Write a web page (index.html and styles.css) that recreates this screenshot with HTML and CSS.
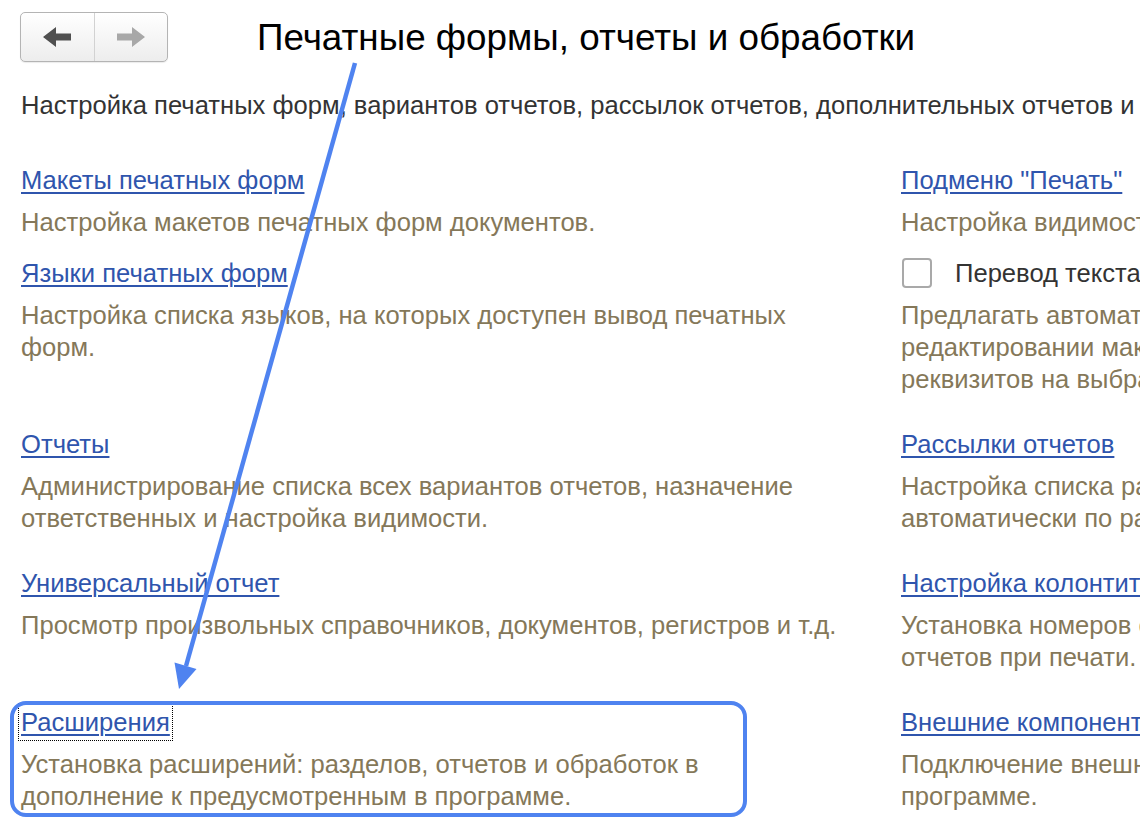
FILE: index.html
```html
<!DOCTYPE html>
<html lang="ru">
<head>
<meta charset="utf-8">
<title>Печатные формы, отчеты и обработки</title>
<link rel="stylesheet" href="styles.css">
</head>
<body>
<div class="page">
  <header class="top">
    <div class="nav">
      <button class="nav-btn back" type="button" aria-label="Назад">
        <svg width="28" height="20" viewBox="0 0 28 20"><polygon points="0,10 13,0 13,6.5 28,6.5 28,13.5 13,13.5 13,20" fill="#505050"/></svg>
      </button>
      <button class="nav-btn fwd" type="button" aria-label="Вперед">
        <svg width="28" height="20" viewBox="0 0 28 20"><polygon points="28,10 15,0 15,6.5 0,6.5 0,13.5 15,13.5 15,20" fill="#a8a8a8"/></svg>
      </button>
    </div>
    <h1 class="title">Печатные формы, отчеты и обработки</h1>
  </header>

  <p class="intro">Настройка печатных форм, вариантов отчетов, рассылок отчетов, дополнительных отчетов и обработок.</p>

  <div class="grid">
    <div class="cell left">
      <div class="item">
        <a class="link" href="#">Макеты печатных форм</a>
        <p class="desc">Настройка макетов печатных форм документов.</p>
      </div>
      <div class="item">
        <a class="link" href="#">Языки печатных форм</a>
        <p class="desc">Настройка списка языков, на которых доступен вывод печатных форм.</p>
      </div>
    </div>
    <div class="cell right">
      <div class="item">
        <a class="link" href="#">Подменю "Печать"</a>
        <p class="desc">Настройка видимости команд в подменю "Печать".</p>
      </div>
      <div class="item">
        <label class="check-row"><span class="checkbox"></span><span class="check-label">Перевод текста при редактировании</span></label>
        <p class="desc">Предлагать автоматический перевод текста при<br>редактировании макетов, а также перевод<br>реквизитов на выбранный язык.</p>
      </div>
    </div>

    <div class="cell left">
      <div class="item">
        <a class="link" href="#">Отчеты</a>
        <p class="desc">Администрирование списка всех вариантов отчетов, назначение ответственных и настройка видимости.</p>
      </div>
    </div>
    <div class="cell right">
      <div class="item">
        <a class="link" href="#">Рассылки отчетов</a>
        <p class="desc">Настройка списка рассылок отчетов, выполняемых<br>автоматически по расписанию.</p>
      </div>
    </div>

    <div class="cell left">
      <div class="item">
        <a class="link" href="#">Универсальный отчет</a>
        <p class="desc">Просмотр произвольных справочников, документов, регистров и т.д.</p>
      </div>
    </div>
    <div class="cell right">
      <div class="item">
        <a class="link" href="#">Настройка колонтитулов</a>
        <p class="desc">Установка номеров страниц, даты и времени для<br>отчетов при печати.</p>
      </div>
    </div>

    <div class="cell left">
      <div class="item highlighted">
        <a class="link focused" href="#">Расширения</a>
        <p class="desc">Установка расширений: разделов, отчетов и обработок в дополнение к предусмотренным в программе.</p>
      </div>
    </div>
    <div class="cell right">
      <div class="item">
        <a class="link" href="#">Внешние компоненты</a>
        <p class="desc">Подключение внешних компонент, используемых в<br>программе.</p>
      </div>
    </div>
  </div>

  <svg class="annot-arrow" width="1140" height="822" viewBox="0 0 1140 822" aria-hidden="true">
    <line x1="355" y1="63" x2="186" y2="666" stroke="#4f83f0" stroke-width="4.5" stroke-linecap="butt"/>
    <polygon points="179,689 174.5,662.5 196.5,669" fill="#4f83f0"/>
  </svg>
</div>
</body>
</html>
```

FILE: styles.css
```css
* { box-sizing: border-box; }

html, body {
  margin: 0;
  padding: 0;
  background: #ffffff;
}

body {
  width: 1140px;
  height: 822px;
  overflow: hidden;
  font-family: "Liberation Sans", Arial, sans-serif;
  font-size: 25.6px;
  line-height: 32px;
  color: #333333;
}

.page {
  position: relative;
  width: 1140px;
  height: 822px;
}

.top {
  display: flex;
  align-items: flex-start;
  gap: 89px;
  padding: 12px 0 0 20px;
}

.nav {
  display: flex;
  flex: none;
  width: 148px;
  height: 50px;
  border: 1px solid #b4b4b4;
  border-radius: 5px;
  background: linear-gradient(#ffffff, #ededed);
  box-shadow: 0 1px 1px rgba(0, 0, 0, 0.08);
  overflow: hidden;
}

.nav-btn {
  flex: 1;
  display: flex;
  align-items: center;
  justify-content: center;
  border: 0;
  padding: 0;
  margin: 0;
  background: transparent;
}

.nav-btn.back {
  border-right: 1px solid #d2d2d2;
}

.title {
  margin: 5px 0 0 0;
  font-size: 36.8px;
  line-height: 42px;
  font-weight: normal;
  color: #000000;
  white-space: nowrap;
}

.intro {
  margin: 27px 0 0 21px;
  white-space: nowrap;
  color: #333333;
}

.grid {
  display: grid;
  grid-template-columns: 880px 400px;
  row-gap: 33px;
  margin-top: 43px;
  padding-left: 21px;
}

.cell {
  display: flex;
  flex-direction: column;
  gap: 19px;
}

.item {
  display: flex;
  flex-direction: column;
  align-items: flex-start;
  gap: 10px;
}

.link {
  color: #2f55ad;
  text-decoration: underline;
  text-decoration-thickness: 2px;
  text-underline-offset: 3px;
}

.link.focused {
  outline: 1px dotted #000000;
  outline-offset: 2px;
}

.desc {
  margin: 0;
  color: #857859;
}

.left .desc {
  max-width: 831px;
}

.left .highlighted .desc {
  max-width: 712px;
}

.right .desc {
  white-space: nowrap;
}

.check-row {
  display: flex;
  align-items: center;
  height: 32px;
  color: #333333;
  white-space: nowrap;
}

.checkbox {
  flex: none;
  width: 30px;
  height: 30px;
  margin-left: 1px;
  border: 2px solid #a9a9a9;
  border-radius: 4px;
  background: #ffffff;
}

.check-label {
  margin-left: 23px;
}

.highlighted {
  position: relative;
}

.highlighted::after {
  content: "";
  position: absolute;
  left: -11px;
  top: -5px;
  bottom: -5px;
  width: 729px;
  border: 4px solid #4f83f0;
  border-radius: 16px;
  pointer-events: none;
}

.annot-arrow {
  position: absolute;
  left: 0;
  top: 0;
  pointer-events: none;
}
```
